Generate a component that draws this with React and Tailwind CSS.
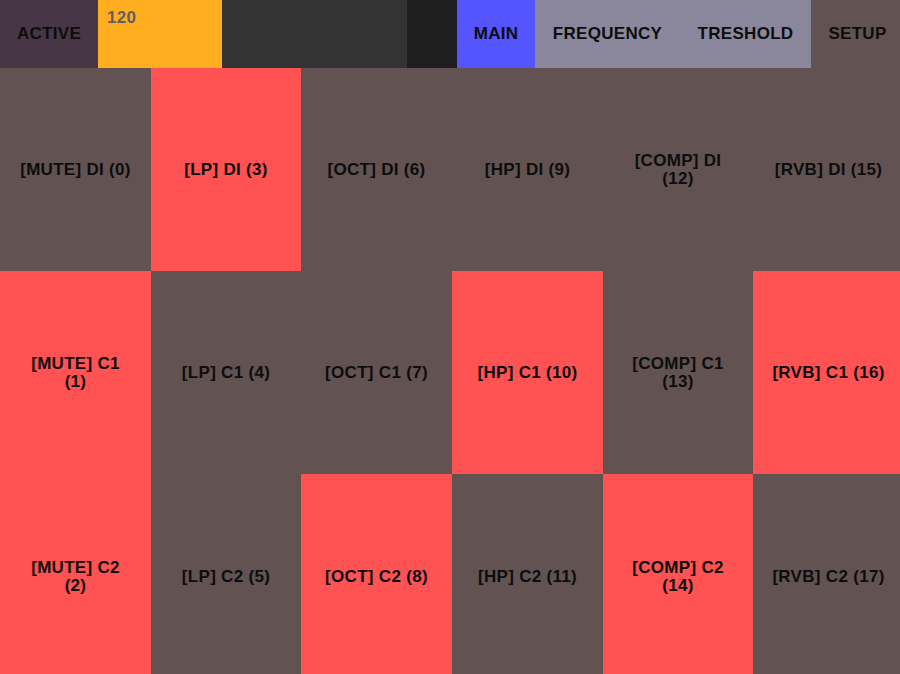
import React from 'react';

const cells = [
  ['[MUTE] DI (0)', false], ['[LP] DI (3)', true], ['[OCT] DI (6)', false], ['[HP] DI (9)', false], ['[COMP] DI (12)', false], ['[RVB] DI (15)', false],
  ['[MUTE] C1 (1)', true], ['[LP] C1 (4)', false], ['[OCT] C1 (7)', false], ['[HP] C1 (10)', true], ['[COMP] C1 (13)', false], ['[RVB] C1 (16)', true],
  ['[MUTE] C2 (2)', true], ['[LP] C2 (5)', false], ['[OCT] C2 (8)', true], ['[HP] C2 (11)', false], ['[COMP] C2 (14)', true], ['[RVB] C2 (17)', false],
];

const App = () => {
  return (
    <div className="w-[900px] h-[674px] overflow-hidden font-['Liberation_Sans',Arial,sans-serif] font-bold text-[17px] tracking-[0.3px] leading-[18px] text-[#0d0d0d]">
      <div className="w-[904px]">
        {/* Top bar */}
        <div className="h-[68px] flex">
          <div className="w-[98px] bg-[#463646] flex items-center justify-center">ACTIVE</div>
          <div className="w-[124px] bg-[#ffae1f] px-[9px] pt-[9px] text-[#5f5f66]">120</div>
          <div className="w-[185px] bg-[#333333]"></div>
          <div className="w-[50px] bg-[#1f1f1f]"></div>
          <div className="w-[78px] bg-[#5555ff] flex items-center justify-center">MAIN</div>
          <div className="w-[145px] bg-[#8a879d] flex items-center justify-center">FREQUENCY</div>
          <div className="w-[131px] bg-[#8a879d] flex items-center justify-center">TRESHOLD</div>
          <div className="flex-1 bg-[#625252] flex items-center justify-center">SETUP</div>
        </div>

        {/* Pad grid */}
        <div className="grid grid-cols-[151px_150px_151px_151px_150px_151px] grid-rows-[203px_203px_206px]">
          {cells.map(([label, on]) => (
            <div
              key={label}
              className={`flex items-center justify-center text-center px-[18px] ${on ? 'bg-[#ff5252]' : 'bg-[#625252]'}`}
            >
              {label}
            </div>
          ))}
        </div>
      </div>
    </div>
  );
};

export default App;
